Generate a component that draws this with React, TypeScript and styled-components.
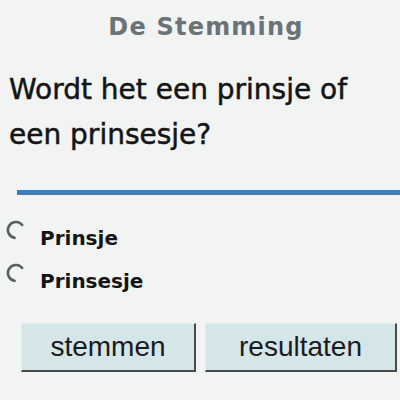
import styled, { createGlobalStyle } from 'styled-components';

const GlobalStyle = createGlobalStyle`
  html, body {
    margin: 0;
    padding: 0;
    background: #f1f4f3;
  }
`;

const StyledPoll = styled.div`
  width: 400px;
  height: 400px;
  overflow: hidden;
  background: #f1f4f3;
  font-family: 'DejaVu Sans', Verdana, sans-serif;
  display: flex;
  flex-direction: column;

  .poll-title {
    margin: 12px 0 0 12px;
    font-size: 24px;
    line-height: 30px;
    font-weight: 700;
    letter-spacing: 1.2px;
    color: #6b7377;
    text-align: center;
  }

  .poll-question {
    margin: 25px 0 0 9px;
    font-size: 28px;
    line-height: 45px;
    font-weight: 400;
    color: #151515;
    -webkit-text-stroke: 0.5px #151515;
  }

  .poll-divider {
    margin: 33px 0 0 17px;
    height: 5px;
    background: #3a7ec0;
  }

  .poll-options {
    margin: 22px 0 0 6px;
    display: flex;
    flex-direction: column;
  }

  .poll-actions {
    margin: 20px 0 0 21px;
    display: flex;
    gap: 9px;
  }
`;

const Option = styled.label`
  display: flex;
  align-items: flex-start;
  gap: 14px;
  height: 43px;
  font-size: 20px;
  line-height: 43px;
  font-weight: 700;
  color: #141414;

  svg {
    margin-top: 3px;
    flex-shrink: 0;
  }
`;

const Button = styled.button<{ $width: number }>`
  width: ${(p) => p.$width}px;
  height: 49px;
  box-sizing: border-box;
  padding: 0;
  background: #d5e6e8;
  border: none;
  border-top: 1px solid #e6efef;
  border-left: 1px solid #e6efef;
  border-right: 2px solid #474b4c;
  border-bottom: 2px solid #474b4c;
  font-family: 'Liberation Sans', Arial, sans-serif;
  font-size: 28px;
  line-height: 44px;
  color: #1b1b1b;
`;

function RadioArc() {
  return (
    <svg width='20' height='20' viewBox='0 0 20 20'>
      <path
        d='M16.1 4.9 A8 8 0 1 0 8.6 17.9'
        fill='none'
        stroke='#5b5f60'
        strokeWidth='2.6'
        strokeLinecap='round'
      />
    </svg>
  );
}

const options = ['Prinsje', 'Prinsesje'];

export default function App() {
  return (
    <>
      <GlobalStyle />
      <StyledPoll>
        <div className='poll-title'>De Stemming</div>
        <div className='poll-question'>
          Wordt het een prinsje of
          <br />
          een prinsesje?
        </div>
        <div className='poll-divider' />
        <div className='poll-options'>
          {options.map((o) => (
            <Option key={o}>
              <RadioArc />
              {o}
            </Option>
          ))}
        </div>
        <div className='poll-actions'>
          <Button $width={175}>stemmen</Button>
          <Button $width={192}>resultaten</Button>
        </div>
      </StyledPoll>
    </>
  );
}
